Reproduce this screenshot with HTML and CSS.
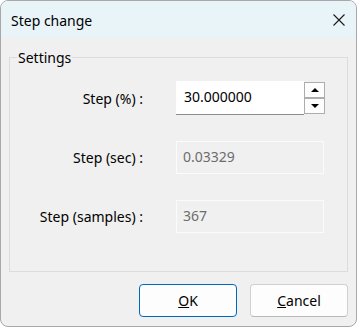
FILE: index.html
```html
<!DOCTYPE html>
<html lang="en">
<head>
  <meta charset="UTF-8" />
  <title>Step change</title>
  <link rel="stylesheet" href="styles.css">
</head>
<body>

  <div class="dialog">
    <div class="titlebar">
      <span class="title">Step change</span>
      <svg class="close" width="12" height="12" viewBox="0 0 12 12">
        <path d="M0.5 0.5 L11.5 11.5 M11.5 0.5 L0.5 11.5" stroke="#1a1a1a" stroke-width="1.1" fill="none"/>
      </svg>
    </div>

    <div class="content">
      <fieldset class="group">
        <legend>Settings</legend>
        <div class="form-grid">
          <label class="field-label">Step (%) :</label>
          <div class="spin">
            <div class="spin-input">30.000000</div>
            <div class="spin-buttons">
              <div class="spin-btn"><span class="tri up"></span></div>
              <div class="spin-btn"><span class="tri down"></span></div>
            </div>
          </div>

          <label class="field-label">Step (sec) :</label>
          <div class="readonly">0.03329</div>

          <label class="field-label">Step (samples) :</label>
          <div class="readonly">367</div>
        </div>
      </fieldset>

      <div class="actions">
        <button class="btn btn-default"><u>O</u>K</button>
        <button class="btn"><u>C</u>ancel</button>
      </div>
    </div>
  </div>

</body>
</html>
```

FILE: styles.css
```css
* {
  box-sizing: border-box;
}

body {
  margin: 0;
  background-color: #fff;
  font-family: 'Noto Sans', 'Open Sans', sans-serif;
  font-size: 14px;
  color: #000;
}

.dialog {
  width: 357px;
  height: 327px;
  background-color: #f0f0f0;
  border: 1px solid #a8a8a8;
  border-radius: 8px;
  overflow: hidden;
}

.titlebar {
  height: 37px;
  background-color: #e9f4f9;
  display: flex;
  align-items: center;
  justify-content: space-between;
  padding: 0 10px 0 10px;
}

.title {
  font-size: 14px;
  margin-top: 1px;
}

.close {
  margin-right: 1px;
}

.content {
  padding: 10px 8px 0 8px;
}

.group {
  margin: 0;
  padding: 14px 0 34px 0;
  border: 1px solid #dcdcdc;
  height: 224px;
}

.group legend {
  margin-left: 7px;
  padding: 0 1px;
  font-size: 14px;
}

.form-grid {
  display: grid;
  grid-template-columns: 133px 148px;
  column-gap: 33px;
  row-gap: 26px;
  align-items: center;
}

.field-label {
  text-align: right;
}

.spin {
  display: flex;
  height: 34px;
  width: 149px;
}

.spin-input {
  flex: 1;
  background-color: #fff;
  border-bottom: 1px solid #8c8c8c;
  padding: 6px 7px 5px 8px;
  font-size: 14px;
}

.spin-buttons {
  display: flex;
  flex-direction: column;
  justify-content: space-between;
  padding: 1px 0;
  width: 21px;
}

.spin-btn {
  height: 16px;
  border: 1px solid #adadad;
  background-color: #fdfdfd;
  display: flex;
  align-items: center;
  justify-content: center;
}

.tri {
  width: 0;
  height: 0;
  border-left: 4px solid transparent;
  border-right: 4px solid transparent;
}

.tri.up {
  border-bottom: 4px solid #000;
}

.tri.down {
  border-top: 4px solid #000;
}

.readonly {
  height: 33px;
  border: 1px solid #fbfbfb;
  color: #6d6d6d;
  padding: 5px 6px;
  font-size: 14px;
}

.actions {
  display: flex;
  justify-content: flex-end;
  gap: 13px;
  margin-top: 12px;
}

.btn {
  width: 98px;
  height: 33px;
  font-family: inherit;
  font-size: 14px;
  color: #000;
  background-color: #fdfdfd;
  border: 1px solid #d0d0d0;
  border-bottom-color: #b8b8b8;
  border-radius: 4px;
  padding: 0;
}

.btn-default {
  border: 1px solid #0067c0;
}
```
